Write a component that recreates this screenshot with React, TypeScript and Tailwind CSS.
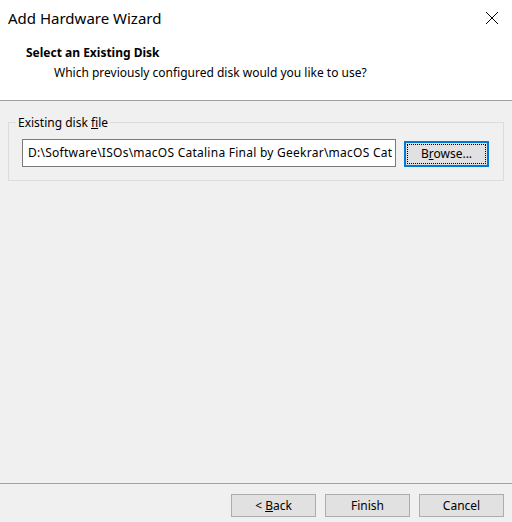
import React from "react";

const font = { fontFamily: '"Segoe UI", "Noto Sans", "Open Sans", sans-serif' };

function WinButton({ children, focused }: { children: React.ReactNode; focused?: boolean }) {
  if (focused) {
    return (
      <button className="h-[26px] w-[85px] border-2 border-[#0078d7] bg-[#e1e1e1] p-px text-[12px] text-black">
        <span className="flex h-full w-full items-center justify-center border border-dotted border-black">
          <span>{children}</span>
        </span>
      </button>
    );
  }
  return (
    <button className="flex h-[23px] w-[85px] items-center justify-center border border-[#adadad] bg-[#e1e1e1] text-[12px] text-black">
      <span>{children}</span>
    </button>
  );
}

export default function App() {
  return (
    <div className="flex h-[522px] w-[512px] flex-col bg-[#f0f0f0] text-black" style={font}>
      <div className="flex h-[100px] flex-col bg-white">
        <div className="flex h-[36px] items-center justify-between pl-[8px] pr-[12px]">
          <span className="text-[15px] leading-none">Add Hardware Wizard</span>
          <svg width="14" height="14" viewBox="0 0 14 14" className="mr-[1px]">
            <path d="M1 1 L13 13 M13 1 L1 13" stroke="#000" strokeWidth="1" />
          </svg>
        </div>
        <div className="pl-[26px] pt-[9px] text-[12px] font-bold leading-[16px]">Select an Existing Disk</div>
        <div className="pl-[54px] pt-[4px] text-[12px] leading-[16px]">
          Which previously configured disk would you like to use?
        </div>
      </div>
      <div className="h-px bg-[#a0a0a0]" />
      <div className="flex flex-1 flex-col px-[8px] pt-[21px]">
        <div className="relative h-[59px] w-[496px] border border-[#dcdcdc]">
          <span className="absolute left-[7px] top-[-8px] bg-[#f0f0f0] px-[2px] text-[12px] leading-[16px]">
            Existing disk <span className="underline">f</span>ile
          </span>
          <div className="flex items-center pl-[13px] pt-[16px]">
            <div className="flex h-[28px] w-[374px] items-center overflow-hidden whitespace-nowrap border border-[#7a7a7a] bg-white pl-[5px] text-[12px] tracking-[0.25px]">
              <span>D:\Software\ISOs\macOS Catalina Final by Geekrar\macOS Cat</span>
            </div>
            <div className="ml-[8px]">
              <WinButton focused>
                B<span className="underline">r</span>owse...
              </WinButton>
            </div>
          </div>
        </div>
      </div>
      <div className="h-px bg-[#a0a0a0]" />
      <div className="flex h-[38px] items-start justify-end gap-[9px] pr-[8px] pt-[10px]">
        <WinButton>
          &lt; <span className="underline">B</span>ack
        </WinButton>
        <WinButton>Finish</WinButton>
        <WinButton>Cancel</WinButton>
      </div>
    </div>
  );
}
